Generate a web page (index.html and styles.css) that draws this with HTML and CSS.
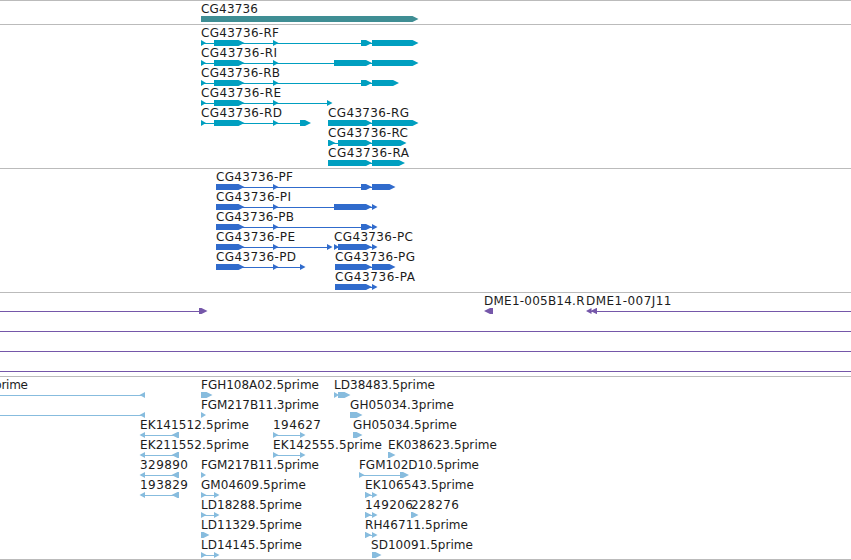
FILE: index.html
```
<!DOCTYPE html>
<html lang="en">
<head>
    <meta charset="UTF-8">
    <meta name="viewport" content="width=device-width, initial-scale=1.0">
    <title>CG43736 - Genome Browser</title>
    <link rel="stylesheet" href="styles.css">
</head>
<body>
    <div class="browser">
        <svg class="track gene" data-track="gene"></svg>
        <svg class="track transcript" data-track="transcript"></svg>
        <svg class="track protein" data-track="protein"></svg>
        <svg class="track bac" data-track="bac"></svg>
        <svg class="track est" data-track="est"></svg>
    </div>
    <script src="tracks.js"></script>
</body>
</html>
```

FILE: styles.css
```
body {
    margin: 0;
    background-color: #fff;
    overflow: hidden;
}
.browser {
    display: flex;
    flex-direction: column;
    box-sizing: border-box;
    height: 560px;
    border-bottom: 1px solid #bbb;
}
.track {
    display: block;
    width: 100%;
    box-sizing: border-box;
    border-top: 1px solid #bbb;
    overflow: hidden;
}
.track text {
    font-family: "DejaVu Sans", sans-serif;
    font-size: 12px;
    fill: #1c1c1c;
}
.intron {
    shape-rendering: crispEdges;
}
.gene {
    height: 24px;
    fill: #3f8e94;
}
.transcript {
    height: 144px;
    fill: #009fc0;
}
.protein {
    height: 124px;
    fill: #306bcc;
}
.bac {
    height: 84px;
    fill: #7557a9;
}
.est {
    height: 183px;
    fill: #87bcde;
}
```

FILE: tracks.js
```
const SVG_NS = 'http://www.w3.org/2000/svg';
const ROW_HEIGHT = 20;

// [row, label, label start, label end, line (or null), blocks, reverse strand]
const tracks = {
    gene: [
        [0, 'CG43736', 201, 258, null, [[201, 418.5]]]
    ],
    transcript: [
        [0, 'CG43736-RF', 201, 279, [201, 372], [[201, 206], [214, 244.5], [273, 278.5], [361, 372], [372, 418.5]]],
        [1, 'CG43736-RI', 201, 277, [201, 372], [[201, 206], [214, 244.5], [273, 278.5], [334, 372], [372, 418.5]]],
        [2, 'CG43736-RB', 201, 280, [201, 372], [[201, 206], [214, 244.5], [273, 278.5], [361, 372], [372, 399]]],
        [3, 'CG43736-RE', 201, 281, [201, 328], [[201, 206], [214, 244.5], [273, 278.5], [327, 332.5]]],
        [4, 'CG43736-RD', 201, 282, [201, 301], [[201, 206], [214, 244.5], [273, 278.5], [300, 311]]],
        [4, 'CG43736-RG', 328, 409, [328, 372], [[328, 372], [372, 418.5]]],
        [5, 'CG43736-RC', 328, 408, [328, 372], [[328, 335.5], [338, 372], [372, 406.5]]],
        [6, 'CG43736-RA', 328, 409, [328, 372], [[328, 372], [372, 405]]]
    ],
    protein: [
        [0, 'CG43736-PF', 216, 293, [216, 372], [[216, 244.5], [273, 278.5], [361, 372], [372, 395.5]]],
        [1, 'CG43736-PI', 216, 291, [216, 372], [[216, 244.5], [273, 278.5], [334, 372], [372, 377.5]]],
        [2, 'CG43736-PB', 216, 294, [216, 372], [[216, 244.5], [273, 278.5], [361, 372], [372, 377.5]]],
        [3, 'CG43736-PE', 216, 295, [216, 328], [[216, 244.5], [273, 278.5], [327, 332.5]]],
        [3, 'CG43736-PC', 334, 413, [334, 372], [[334, 339], [338, 372], [372, 377.5]]],
        [4, 'CG43736-PD', 216, 296, [216, 301], [[216, 244.5], [273, 278.5], [300, 305.5]]],
        [4, 'CG43736-PG', 335, 415, [335, 372], [[335, 372], [372, 395.5]]],
        [5, 'CG43736-PA', 335, 415, [335, 372], [[335, 372], [372, 377.5]]]
    ],
    bac: [
        [0, '', 0, 0, [0, 200], [[199, 207.5]]],
        [0, 'DME1-005B14.R', 484, 584.5, null, [[484, 493]], true],
        [0, 'DME1-007J11', 586, 671.5, [590, 851], [[586, 591.5], [590.5, 597]], true],
        [1, '', 0, 0, [0, 851], []],
        [2, '', 0, 0, [0, 851], []],
        [3, '', 0, 0, [0, 851], []]
    ],
    est: [
        [0, 'prime', -6, 28, [0, 141], [[139.5, 145]], true],
        [1, '', 0, 0, [0, 141], [[139.5, 145]], true],
        [0, 'FGH108A02.5prime', 201, 319, null, [[201, 212.5]]],
        [1, 'FGM217B11.3prime', 201, 319, null, [[201, 206]]],
        [0, 'LD38483.5prime', 334, 435, null, [[334, 339], [338, 350.5]]],
        [1, 'GH05034.3prime', 350, 454, null, [[350, 362.5]]],
        [2, 'EK141512.5prime', 140, 249, [141, 176], [[139.5, 145], [171.5, 179]], true],
        [2, '194627', 273, 321, [273, 301], [[273, 278.5], [300, 305.5]]],
        [2, 'GH05034.5prime', 353, 457, null, [[353, 362.5]]],
        [3, 'EK211552.5prime', 140, 249, [141, 176], [[139.5, 145], [171.5, 179]], true],
        [3, 'EK142555.5prime', 273, 382, [273, 301], [[273, 278.5], [300, 305.5]]],
        [3, 'EK038623.5prime', 388, 497, null, [[388, 395.5]]],
        [4, '329890', 140, 188, [141, 176], [[139.5, 145], [171.5, 179]], true],
        [4, 'FGM217B11.5prime', 201, 319, null, [[201, 206]]],
        [4, 'FGM102D10.5prime', 359, 479, [359, 402], [[359, 364.5], [400, 409]]],
        [5, '193829', 140, 188, [141, 176], [[139.5, 145], [171.5, 179]], true],
        [5, 'GM04609.5prime', 201, 306, [201, 215], [[201, 206.5], [214, 219.5]]],
        [5, 'EK106543.5prime', 365, 474, [365, 373], [[365, 371.5], [372, 377.5]]],
        [6, 'LD18288.5prime', 201, 302, [201, 215], [[201, 206.5], [214, 219.5]]],
        [6, '149206', 365, 413, [365, 373], [[365, 371.5], [372, 377.5]]],
        [6, '228276', 411, 459, null, [[411, 418.5]]],
        [7, 'LD11329.5prime', 201, 302, null, [[201, 209.5]]],
        [7, 'RH46711.5prime', 365, 468, [365, 373], [[365, 371.5], [372, 377.5]]],
        [8, 'LD14145.5prime', 201, 302, [201, 215], [[201, 206.5], [214, 219.5]]],
        [8, 'SD10091.5prime', 371, 473, null, [[372, 381.5]]]
    ]
};

function add(svg, name, attrs) {
    const el = document.createElementNS(SVG_NS, name);
    for (const key in attrs) {
        el.setAttribute(key, attrs[key]);
    }
    svg.appendChild(el);
    return el;
}

// Block with an arrow head pointing along the strand
function arrowPoints(start, end, y, reverse) {
    const head = Math.min(6, end - start);
    if (reverse) {
        return `${end},${y} ${start + head},${y} ${start},${y + 3} ${start + head},${y + 6} ${end},${y + 6}`;
    }
    return `${start},${y} ${end - head},${y} ${end},${y + 3} ${end - head},${y + 6} ${start},${y + 6}`;
}

document.querySelectorAll('.track').forEach(svg => {
    tracks[svg.dataset.track].forEach(([row, label, from, to, line, blocks, reverse]) => {
        const top = row * ROW_HEIGHT;
        if (line) {
            add(svg, 'rect', { class: 'intron', x: line[0], y: top + 18, width: line[1] - line[0], height: 1 });
        }
        blocks.forEach(([start, end]) => {
            add(svg, 'polygon', { points: arrowPoints(start, end, top + 15, reverse) });
        });
        if (label) {
            const text = add(svg, 'text', { x: from, y: top + 12, textLength: to - from });
            text.textContent = label;
        }
    });
});
```
